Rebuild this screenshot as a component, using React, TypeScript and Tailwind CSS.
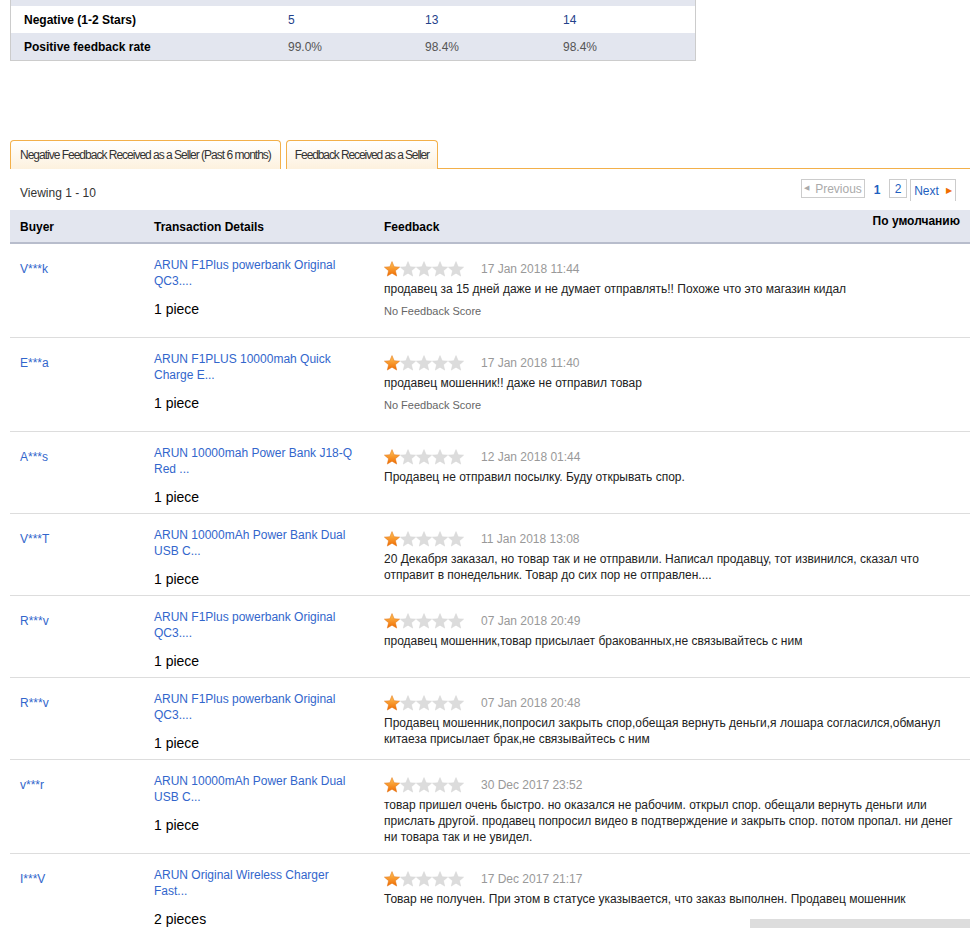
import React from "react";

interface Row {
  buyer: string;
  product: string;
  qty: string;
  date: string;
  comment: string[];
  noScore?: boolean;
}

const rows: Row[] = [
  {
    buyer: "V***k",
    product: "ARUN F1Plus powerbank Original QC3....",
    qty: "1 piece",
    date: "17 Jan 2018 11:44",
    comment: ["продавец за 15 дней даже и не думает отправлять!! Похоже что это магазин кидал"],
    noScore: true,
  },
  {
    buyer: "E***a",
    product: "ARUN F1PLUS 10000mah Quick Charge E...",
    qty: "1 piece",
    date: "17 Jan 2018 11:40",
    comment: ["продавец мошенник!! даже не отправил товар"],
    noScore: true,
  },
  {
    buyer: "A***s",
    product: "ARUN 10000mah Power Bank J18-Q Red ...",
    qty: "1 piece",
    date: "12 Jan 2018 01:44",
    comment: ["Продавец не отправил посылку. Буду открывать спор."],
  },
  {
    buyer: "V***T",
    product: "ARUN 10000mAh Power Bank Dual USB C...",
    qty: "1 piece",
    date: "11 Jan 2018 13:08",
    comment: [
      "20 Декабря заказал, но товар так и не отправили. Написал продавцу, тот извинился, сказал что",
      "отправит в понедельник. Товар до сих пор не отправлен....",
    ],
  },
  {
    buyer: "R***v",
    product: "ARUN F1Plus powerbank Original QC3....",
    qty: "1 piece",
    date: "07 Jan 2018 20:49",
    comment: ["продавец мошенник,товар присылает бракованных,не связывайтесь с ним"],
  },
  {
    buyer: "R***v",
    product: "ARUN F1Plus powerbank Original QC3....",
    qty: "1 piece",
    date: "07 Jan 2018 20:48",
    comment: [
      "Продавец мошенник,попросил закрыть спор,обещая вернуть деньги,я лошара согласился,обманул",
      "китаеза присылает брак,не связывайтесь с ним",
    ],
  },
  {
    buyer: "v***r",
    product: "ARUN 10000mAh Power Bank Dual USB C...",
    qty: "1 piece",
    date: "30 Dec 2017 23:52",
    comment: [
      "товар пришел очень быстро. но оказался не рабочим. открыл спор. обещали вернуть деньги или",
      "прислать другой. продавец попросил видео в подтверждение и закрыть спор. потом пропал. ни денег",
      "ни товара так и не увидел.",
    ],
  },
  {
    buyer: "I***V",
    product: "ARUN Original Wireless Charger Fast...",
    qty: "2 pieces",
    date: "17 Dec 2017 21:17",
    comment: ["Товар не получен. При этом в статусе указывается, что заказ выполнен. Продавец мошенник"],
  },
];

function Star({ on }: { on: boolean }) {
  return (
    <svg width="16" height="16" viewBox="0 0 16 16">
      <defs>
        <linearGradient id="starOn" x1="0" y1="0" x2="0" y2="1">
          <stop offset="0" stopColor="#ffc45a" />
          <stop offset="1" stopColor="#f06c00" />
        </linearGradient>
      </defs>
      <path
        d="M8 0.6L10.12 5.69L15.61 6.13L11.42 9.71L12.7 15.07L8 12.2L3.3 15.07L4.58 9.71L0.39 6.13L5.88 5.69Z"
        fill={on ? "url(#starOn)" : "#dcdcdc"}
        stroke={on ? "#e07010" : "#d4d4d4"}
        strokeWidth="0.5"
        strokeLinejoin="round"
      />
    </svg>
  );
}

function Stars({ count }: { count: number }) {
  return (
    <div className="flex">
      {[0, 1, 2, 3, 4].map((i) => (
        <Star key={i} on={i < count} />
      ))}
    </div>
  );
}

export default function App() {
  return (
    <div
      className="relative min-h-[928px] bg-white pl-[10px] text-[12px] text-[#333]"
      style={{ fontFamily: '"Liberation Sans", Arial, sans-serif' }}
    >
      {/* summary table */}
      <div className="w-[686px] border-x border-b border-[#ccc]">
        <div className="h-[6px] bg-[#e3e6ef]" />
        <div className="grid h-[27px] grid-cols-[264px_137px_138px_1fr] items-center bg-white pl-[13px]">
          <span className="font-bold text-black">Negative (1-2 Stars)</span>
          <span className="text-[#23418a]">5</span>
          <span className="text-[#23418a]">13</span>
          <span className="text-[#23418a]">14</span>
        </div>
        <div className="grid h-[27px] grid-cols-[264px_137px_138px_1fr] items-center bg-[#e3e6ef] pl-[13px]">
          <span className="font-bold text-black">Positive feedback rate</span>
          <span className="text-[#555]">99.0%</span>
          <span className="text-[#555]">98.4%</span>
          <span className="text-[#555]">98.4%</span>
        </div>
      </div>

      {/* tabs */}
      <div className="mt-[79px] flex h-[29px] w-[960px] items-end">
        <div className="flex h-[29px] items-center rounded-t-[4px] border border-b-0 border-[#f3b04a] bg-gradient-to-b from-white to-[#fdf1de] px-[9px] tracking-[-1px] text-[#333]">
          Negative Feedback Received as a Seller (Past 6 months)
        </div>
        <div className="ml-[5px] flex h-[29px] items-center rounded-t-[4px] border border-b-0 border-[#f3b04a] bg-gradient-to-b from-white to-[#fdf1de] px-[8px] tracking-[-1.1px] text-[#333]">
          Feedback Received as a Seller
        </div>
        <div className="flex-1 border-b border-[#f3b04a]" />
      </div>

      {/* viewing + pagination */}
      <div className="flex h-[41px] w-[960px] items-start justify-between pt-[10px]">
        <span className="mt-[6px] pl-[10px] leading-4">Viewing 1 - 10</span>
        <div className="flex items-start pr-[14px] text-[12px]">
          <span className="flex h-[19px] w-[64px] items-center justify-center gap-[6px] border border-[#ccc] text-[#aaa]">
            <span className="text-[7px] text-[#aaa]">◀</span>
            Previous
          </span>
          <span className="w-[24px] pt-[2px] text-center font-bold text-[#1e5fc0]">1</span>
          <span className="flex h-[19px] w-[18px] items-center justify-center border border-[#ccc] text-[#1e5fc0]">
            2
          </span>
          <span className="ml-[3px] flex h-[22px] w-[46px] items-start justify-center gap-[7px] border border-b-0 border-[#ccc] pt-[2px] text-[#1e5fc0]">
            Next
            <span className="pt-[3px] text-[8px] text-[#f06c00]">▶</span>
          </span>
        </div>
      </div>

      {/* feedback table */}
      <div className="w-[960px]">
        <div className="relative grid h-[34px] grid-cols-[134px_230px_1fr] items-center border-b-2 border-[#b8bdcc] bg-[#e3e6ef] pt-[1px] font-bold text-black">
          <span className="pl-[10px]">Buyer</span>
          <span className="pl-[10px]">Transaction Details</span>
          <span className="pl-[10px]">Feedback</span>
          <span className="absolute right-[10px] top-[2px]">По умолчанию</span>
        </div>
        {rows.map((r, i) => (
          <div key={i} className="grid grid-cols-[134px_230px_1fr] border-b border-[#ddd]">
            <div className="pl-[10px] pt-[17px] leading-4 text-[#3266cc]">{r.buyer}</div>
            <div className="px-[10px] pb-[6px] pt-[13px]">
              <div className="w-[210px] leading-4 text-[#3266cc]">{r.product}</div>
              <div className="mt-[10px] text-[14px] leading-5 text-black">{r.qty}</div>
            </div>
            <div className="px-[10px] pb-[8px] pt-[13px]">
              <div className="flex h-6 items-center gap-[17px]">
                <Stars count={1} />
                <span className="text-[#999]">{r.date}</span>
              </div>
              {r.comment.map((line, j) => (
                <div key={j} className="whitespace-nowrap leading-4 text-[#222]">
                  {line}
                </div>
              ))}
              {r.noScore && (
                <div className="mb-[10px] mt-[6px] text-[11px] leading-4 text-[#666]">No Feedback Score</div>
              )}
            </div>
          </div>
        ))}
      </div>

      <div className="fixed bottom-0 right-[5px] h-[9px] w-[220px] bg-[#ddd]" />
    </div>
  );
}
